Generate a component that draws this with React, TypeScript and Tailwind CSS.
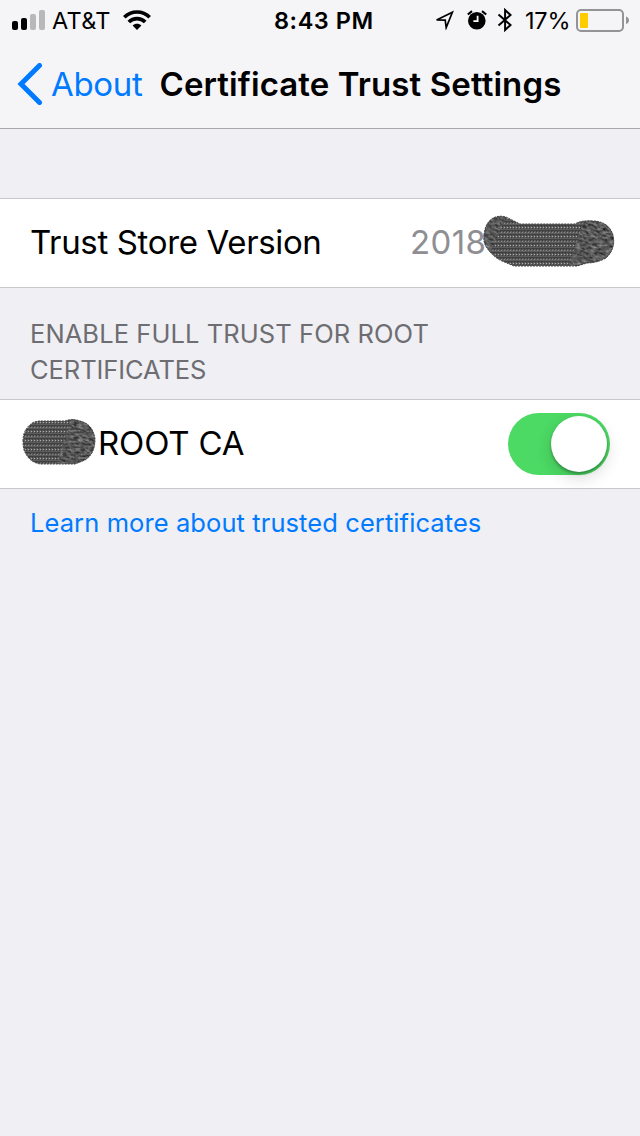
import { useId } from "react";

function StatusBar() {
  return (
    <div className="flex h-10 w-full items-center whitespace-nowrap text-[23.5px] leading-10">
      <svg className="ml-3 shrink-0" width="34" height="20" viewBox="0 0 34 20">
        <rect x="0" y="11" width="6" height="9" rx="2" fill="#000" />
        <rect x="9" y="8" width="6" height="12" rx="2" fill="#000" />
        <rect x="18" y="4" width="6" height="16" rx="2" fill="#b8b8ba" />
        <rect x="27" y="0" width="6" height="20" rx="2" fill="#b8b8ba" />
      </svg>
      <span className="ml-[6px] w-[71px] pt-[2px] tracking-[0.3px]">AT&amp;T</span>
      <svg className="shrink-0" width="28" height="20" viewBox="0 0 28 20">
        <g fill="none" stroke="#000" strokeWidth="3.7">
          <path d="M1.3 7.3C8.3.2 19.7.2 26.7 7.3" />
          <path d="M5.8 12C10.4 7.4 17.6 7.4 22.2 12" />
        </g>
        <path d="M9.6 15.5C12 13.1 16 13.1 18.4 15.5L14 20Z" fill="#000" />
      </svg>
      <span className="ml-[123px] w-[160px] pt-[2px] font-semibold tracking-[0.55px]">8:43 PM</span>
      <svg className="shrink-0" width="20" height="20" viewBox="0 0 20 20">
        <path d="M2.6 10L18.4 2.3L12.2 17.6L11.2 10.1Z" fill="none" stroke="#000" strokeWidth="1.7" />
      </svg>
      <svg className="ml-[13px] shrink-0" width="20" height="20" viewBox="0 0 20 20">
        <circle cx="9.8" cy="10.8" r="8.8" fill="#000" />
        <path d="M.8 4.5L5 1.2M19.2 4.5L15 1.2" fill="none" stroke="#000" strokeWidth="2.2" />
        <path d="M10.6 5.8V11.2H6.4" fill="none" stroke="#fff" strokeWidth="1.8" />
      </svg>
      <svg className="ml-[10px] shrink-0" width="16" height="24" viewBox="0 0 16 24">
        <path d="M1.5 6.5L13.5 17L8.1 22V2L13.5 7L1.5 17.5" fill="none" stroke="#000" strokeWidth="2" />
      </svg>
      <span className="ml-[12px] w-[51px] pt-[2px] tracking-[-0.2px]">17%</span>
      <svg className="shrink-0" width="54" height="24" viewBox="0 0 54 24">
        <rect x="1" y="2" width="46" height="21" rx="4" fill="none" stroke="#949496" strokeWidth="2" />
        <rect x="4" y="5" width="8" height="15" rx="1" fill="#ffcc00" />
        <path d="M50 8.5Q53 9.5 53 12.3T50 16Z" fill="#949496" />
      </svg>
    </div>
  );
}

type ScribbleProps = { width: number; height: number; outline: string; curlX: number; className: string };

function Scribble({ width, height, outline, curlX, className }: ScribbleProps) {
  const id = useId().replace(/:/g, "");
  return (
    <svg className={className} width={width} height={height} viewBox={`0 0 ${width} ${height}`} aria-hidden="true">
      <defs>
        <clipPath id={`${id}c`}><path d={outline} /></clipPath>
        <pattern id={`${id}p`} width="3" height="9" patternUnits="userSpaceOnUse">
          <rect width="3" height="9" fill="#5c5c5c" />
          <path d="M0 1.5H3M0 6.5H3" stroke="#404040" />
          <path d="M0 3.5H1" stroke="#ababab" />
          <path d="M0 8.5H1" stroke="#888" />
          <path d="M1 4.5H2M1 2.5H2M2 7.5H3" stroke="#3c3c3c" />
        </pattern>
        <filter id={`${id}f`} x="0" y="0" width="100%" height="100%" colorInterpolationFilters="sRGB">
          <feTurbulence type="fractalNoise" baseFrequency="0.2 0.5" numOctaves="3" seed="7" />
          <feColorMatrix values="0.85 0 0 0 -.08 0.85 0 0 0 -.08 0.85 0 0 0 -.08 0 0 0 0 1" />
        </filter>
      </defs>
      <g clipPath={`url(#${id}c)`}>
        <rect width={width} height={height} fill={`url(#${id}p)`} />
        <g transform={`rotate(18 ${curlX} ${height / 2})`}>
          <rect x={curlX} y="-20" width={width} height={height + 30} opacity=".85" filter={`url(#${id}f)`} />
        </g>
        {width > 100 && (
          <g transform="rotate(25)">
            <rect x="-10" y="-20" width="32" height={height + 12} opacity=".8" filter={`url(#${id}f)`} />
          </g>
        )}
      </g>
      <path d={outline} fill="none" stroke="#404040" strokeWidth="1" strokeDasharray="2 1" />
    </svg>
  );
}

export default function App() {
  return (
    <main className="flex h-[1136px] w-[640px] flex-col overflow-hidden bg-[#efeff4] font-['Inter',sans-serif] text-black">
      <header className="h-[129px] shrink-0 border-b border-[#a7a7ac] bg-[#f5f5f7]">
        <StatusBar />
        <div className="flex h-[88px] items-center whitespace-nowrap text-[33px]">
          <button className="flex w-[142px] items-center pl-[17px] text-[#007aff]">
            <svg className="shrink-0" width="26" height="42" viewBox="0 0 26 42">
              <path d="M22.5 2.5L4 21L22.5 39.5" fill="none" stroke="currentColor" strokeWidth="5" strokeLinecap="round" />
            </svg>
            <span className="ml-[8px] pt-[2px] tracking-[-0.3px]">About</span>
          </button>
          <h1 className="ml-[17.5px] pt-[2px] font-semibold tracking-[0.1px]">Certificate Trust Settings</h1>
        </div>
      </header>

      <section className="mt-[69px] flex h-[90px] shrink-0 items-center border-y border-[#c8c7cc] bg-white whitespace-nowrap text-[33px]">
        <span className="ml-[30px] w-[380px] tracking-[-0.35px]">Trust Store Version</span>
        <span className="w-[73px] tracking-[0.35px] text-[#8e8e93]">2018</span>
        <Scribble
          className="mb-[4px] shrink-0"
          width={132}
          height={52}
          curlX={94}
          outline="M1 20Q2 8 10 3Q19-1 27 4L37 9H92Q98 5 111 6Q126 7 130 20Q133 34 123 43Q114 48 104 48L94 51H31L19 46Q10 42 4 33Q0 28 1 20Z"
        />
      </section>

      <h2 className="flex h-[111px] shrink-0 flex-col pt-[28px] pl-[30px] whitespace-nowrap text-[25.5px] leading-[36px] text-[#6d6d72]">
        <span className="tracking-[0.08px]">ENABLE FULL TRUST FOR ROOT</span>
        <span className="tracking-[-0.08px]">CERTIFICATES</span>
      </h2>

      <section className="flex h-[90px] shrink-0 items-center border-y border-[#c8c7cc] bg-white whitespace-nowrap text-[33px]">
        <Scribble
          className="mb-[4px] ml-[22px] shrink-0"
          width={74}
          height={46}
          curlX={42}
          outline="M1 22Q1 9 12 3L17 2H43Q50-1 58 2Q71 5 73 20Q73 35 63 41L53 45H18Q8 43 4 35Q1 31 1 22Z"
        />
        <span className="ml-[2px] w-[410px] tracking-[-0.15px]">ROOT CA</span>
        <button role="switch" aria-checked="true" aria-label="ROOT CA" className="flex h-[62px] w-[102px] items-center justify-end rounded-full bg-[#4cd964] pr-[3px]">
          <span className="size-[56px] rounded-full bg-white shadow-[0_6px_16px_rgba(0,0,0,0.15),0_2px_3px_rgba(0,0,0,0.3)]" />
        </button>
      </section>
      <a className="mt-[16px] ml-[30px] whitespace-nowrap text-[25.5px] leading-[36px] tracking-[0.09px] text-[#007aff]">Learn more about trusted certificates</a>
    </main>
  );
}
